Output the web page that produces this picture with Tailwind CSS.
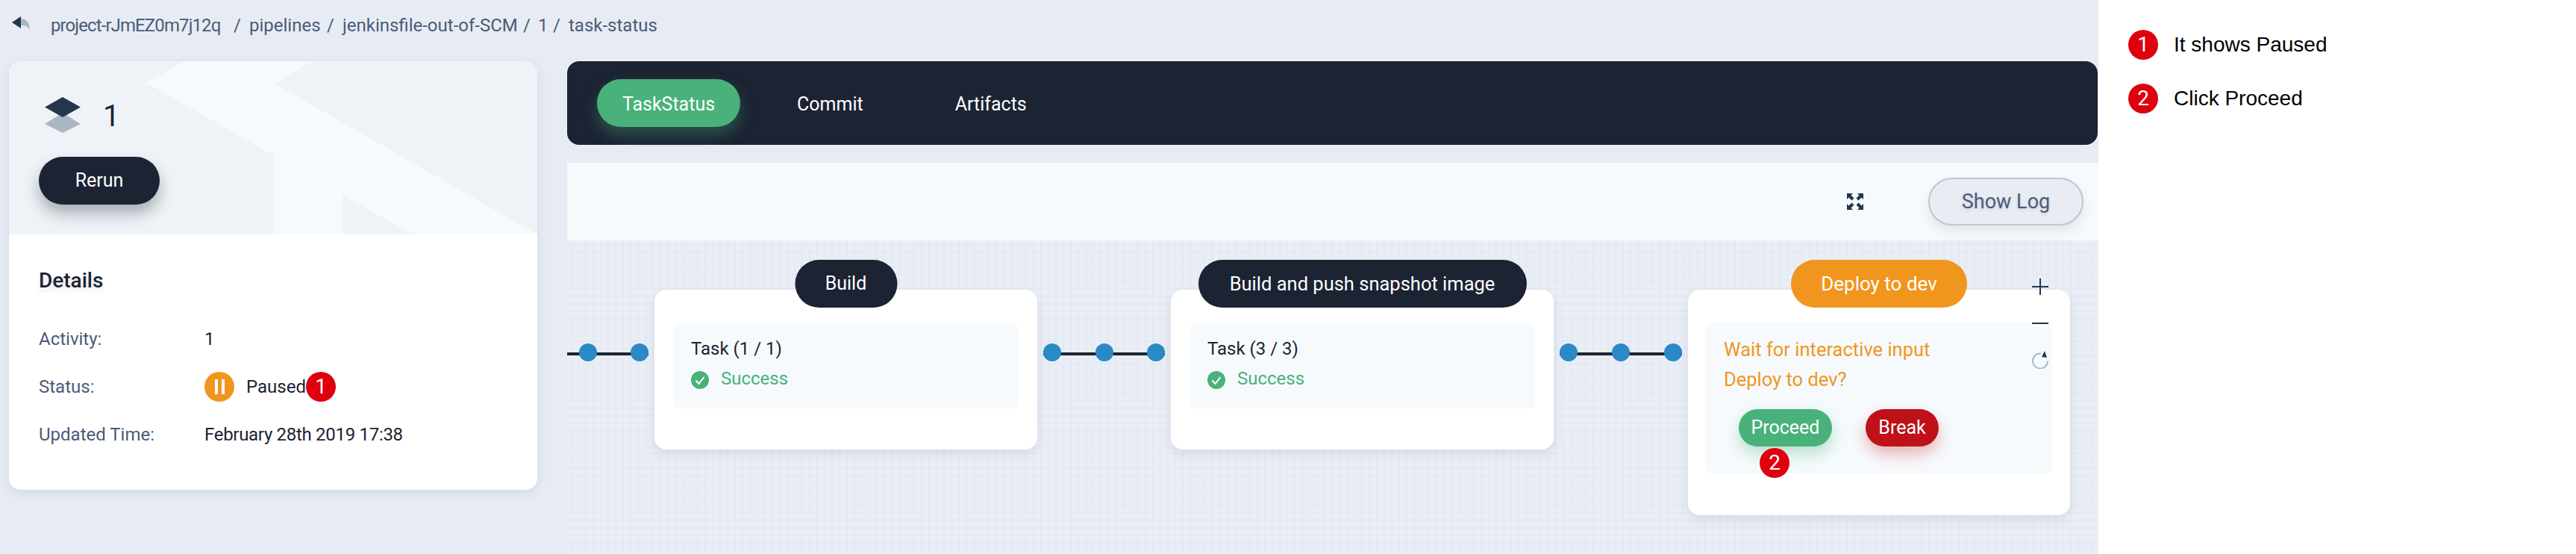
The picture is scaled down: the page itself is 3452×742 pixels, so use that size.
<!DOCTYPE html>
<html lang="en">
<head>
    <meta charset="UTF-8">
    <title>task-status</title>
    <script src="https://cdn.jsdelivr.net/npm/@tailwindcss/browser@4"></script>
</head>
<body class="font-['Roboto',sans-serif] text-[24px] text-[#1c2333] bg-white">

<div class="flex h-[742px] w-[3452px] overflow-hidden">
    <!-- Main area -->
    <div class="w-[2812px] shrink-0 bg-[#e7ecf4] flex flex-col">

        <!-- Breadcrumb -->
        <div class="h-[82px] shrink-0 flex items-start pt-[16px] pl-[16px] text-[#4a5b78] whitespace-nowrap">
            <svg class="w-[24px] h-[28px] mr-[28px] mt-[1px]" viewBox="0 0 24 28">
                <path d="M12 8 C19 8 24 14 24 23 C21 18 17 17 12 17 Z" fill="#a9b7c4"/>
                <path d="M0 13 L12 5 L12 21 Z" fill="#24364b"/>
            </svg>
            <span class="w-[234px] tracking-[-0.9px]">project-rJmEZ0m7j12q</span>
            <span class="w-[32px] text-center">/</span>
            <span class="w-[93px]">pipelines</span>
            <span class="w-[32px] text-center">/</span>
            <span class="w-[232px]">jenkinsfile-out-of-SCM</span>
            <span class="w-[30px] text-center">/</span>
            <span class="w-[9px]">1</span>
            <span class="w-[32px] text-center">/</span>
            <span>task-status</span>
        </div>

        <div class="flex flex-1 min-h-0">
            <!-- Left card -->
            <div class="ml-[12px] w-[708px] h-[574px] shrink-0 rounded-[16px] bg-white shadow-[0_4px_16px_rgba(36,46,66,0.1)] overflow-hidden">
                <div class="relative h-[232px] bg-[#eff3f7] pl-[40px] pt-[48px]">
                    <svg class="absolute left-0 top-0 w-[708px] h-[232px]" viewBox="0 0 708 232">
                        <polygon points="235,0 184,29 355,126 355,232 447,232 447,179 541,232 708,232 356,30 407,0" fill="#f6fafd"/>
                    </svg>
                    <div class="relative flex items-center h-[48px] pl-[8px]">
                        <svg class="w-[48px] h-[48px]" viewBox="0 0 48 48">
                            <path d="M24 21 L48 36 L24 48 L0 36 Z" fill="#a9b7c4"/>
                            <path d="M24 0 L48 13.5 L24 27 L0 13.5 Z" fill="#24364b"/>
                        </svg>
                        <span class="ml-[30px] mt-[4px] text-[40px] leading-[48px]">1</span>
                    </div>
                    <button class="relative mt-[32px] w-[162px] h-[64px] rounded-full bg-[#1c2333] text-white text-[25px] shadow-[0_12px_20px_rgba(36,46,66,0.35)]">Rerun</button>
                </div>
                <div class="pl-[40px] pt-[44px]">
                    <h3 class="text-[28px] leading-[36px] font-medium [text-shadow:0_4px_6px_rgba(36,46,66,0.12)]">Details</h3>
                    <div class="mt-[28px] flex flex-col">
                        <div class="flex items-center h-[64px]">
                            <span class="w-[222px] text-[#4a5b78]">Activity:</span><span>1</span>
                        </div>
                        <div class="flex items-center h-[64px]">
                            <span class="w-[222px] text-[#4a5b78]">Status:</span>
                            <span class="w-[40px] h-[40px] rounded-full bg-[#f0961e] flex items-center justify-center gap-[5px]">
                                <i class="w-[4px] h-[20px] bg-white"></i><i class="w-[4px] h-[20px] bg-white"></i>
                            </span>
                            <span class="ml-[16px] w-[80px]">Paused</span>
                            <span class="w-[40px] h-[40px] rounded-full bg-[#df000f] text-white flex items-center justify-center text-[28px]">1</span>
                        </div>
                        <div class="flex items-center h-[64px]">
                            <span class="w-[222px] text-[#4a5b78]">Updated Time:</span><span class="tracking-[-0.3px]">February 28th 2019 17:38</span>
                        </div>
                    </div>
                </div>
            </div>

            <!-- Right column -->
            <div class="ml-[40px] flex-1 min-w-0 flex flex-col">
                <div class="h-[112px] shrink-0 mr-[1px] rounded-[16px] bg-[#1c2333] flex items-center pl-[40px] text-white text-[25px]">
                    <a class="w-[192px] h-[64px] rounded-full bg-[#48b27a] flex items-center justify-center pt-[3px] shadow-[0_10px_20px_rgba(72,178,122,0.35)]">TaskStatus</a>
                    <a class="ml-[76px] mt-[3px]">Commit</a>
                    <a class="ml-[123px] mt-[3px]">Artifacts</a>
                </div>

                <div class="mt-[24px] h-[104px] shrink-0 bg-[#f6fafd] flex items-center justify-end pr-[20px]">
                    <svg class="w-[22px] h-[22px] mr-[87px] mt-[-1px]" viewBox="0 0 22 22" fill="#24364b">
                        <path d="M0 0 H8 L5.5 2.5 L9.5 6.5 L6.5 9.5 L2.5 5.5 L0 8 Z"/>
                        <path d="M22 0 V8 L19.500 5.500 L15.500 9.500 L12.500 6.500 L16.500 2.500 L14 0 Z"/>
                        <path d="M0 22 V14 L2.500 16.500 L6.500 12.500 L9.500 15.500 L5.500 19.500 L8 22 Z"/>
                        <path d="M22 22 H14 L16.500 19.500 L12.500 15.500 L15.500 12.500 L19.500 16.500 L22 14 Z"/>
                    </svg>
                    <button class="w-[208px] h-[64px] rounded-full border-2 border-[#bcc6d3] bg-[#e9edf3] text-[#4a5b78] text-[27px] shadow-[0_8px_16px_rgba(36,46,66,0.1)] [text-shadow:0_2px_4px_rgba(36,46,66,0.15)]">Show Log</button>
                </div>

                <!-- Pipeline canvas -->
                <div class="relative flex-1 min-h-0 overflow-hidden bg-[#eaeff7] bg-[linear-gradient(#e5eaf2_2px,transparent_2px),linear-gradient(90deg,#e5eaf2_2px,transparent_2px)] bg-[size:10px_10px] bg-[position:4px_4px] pt-[66px] flex items-start">
                    <!-- line into first stage -->
                    <div class="relative w-[117px] h-[214px] shrink-0 flex items-center">
                        <div class="absolute left-0 right-[8px] top-[84px] h-[4px] bg-[#1c2333]"></div>
                        <span class="absolute left-[16px] top-[72px] w-[24px] h-[24px] rounded-full bg-[#2a8ac6]"></span>
                        <span class="absolute left-[85px] top-[72px] w-[24px] h-[24px] rounded-full bg-[#2a8ac6]"></span>
                    </div>

                    <!-- Build -->
                    <div class="relative w-[513px] h-[214px] shrink-0 rounded-[16px] bg-white shadow-[0_6px_16px_rgba(36,46,66,0.1)] px-[25px] pt-[45px]">
                        <div class="absolute left-1/2 -translate-x-1/2 top-[-40px] w-[137px] h-[64px] rounded-full bg-[#1c2333] text-white text-[25px] flex items-center justify-center">Build</div>
                        <div class="h-[114px] rounded-[8px] bg-[#f6fafd] pl-[24px] pt-[16px]">
                            <p class="leading-[36px]">Task (1 / 1)</p>
                            <p class="mt-[4px] flex items-center text-[#48b27a] leading-[36px]">
                                <svg class="w-[24px] h-[24px] mr-[16px] mt-[4px]" viewBox="0 0 24 24"><circle cx="12" cy="12" r="12" fill="#48b27a"/><path d="M6.500 12.500 L10.500 17 L17.500 8" fill="none" stroke="#fff" stroke-width="2"/></svg>
                                Success
                            </p>
                        </div>
                    </div>

                    <!-- connector -->
                    <div class="relative w-[179px] h-[214px] shrink-0">
                        <div class="absolute left-[8px] right-[8px] top-[84px] h-[4px] bg-[#1c2333]"></div>
                        <span class="absolute left-[8px] top-[72px] w-[24px] h-[24px] rounded-full bg-[#2a8ac6]"></span>
                        <span class="absolute left-[78px] top-[72px] w-[24px] h-[24px] rounded-full bg-[#2a8ac6]"></span>
                        <span class="absolute left-[147px] top-[72px] w-[24px] h-[24px] rounded-full bg-[#2a8ac6]"></span>
                    </div>

                    <!-- Build and push snapshot image -->
                    <div class="relative w-[513px] h-[214px] shrink-0 rounded-[16px] bg-white shadow-[0_6px_16px_rgba(36,46,66,0.1)] px-[25px] pt-[45px]">
                        <div class="absolute left-1/2 -translate-x-1/2 top-[-40px] w-[440px] h-[64px] rounded-full bg-[#1c2333] text-white text-[25.500px] flex items-center justify-center whitespace-nowrap">Build and push snapshot image</div>
                        <div class="h-[114px] rounded-[8px] bg-[#f6fafd] pl-[24px] pt-[16px]">
                            <p class="leading-[36px]">Task (3 / 3)</p>
                            <p class="mt-[4px] flex items-center text-[#48b27a] leading-[36px]">
                                <svg class="w-[24px] h-[24px] mr-[16px] mt-[4px]" viewBox="0 0 24 24"><circle cx="12" cy="12" r="12" fill="#48b27a"/><path d="M6.500 12.500 L10.500 17 L17.500 8" fill="none" stroke="#fff" stroke-width="2"/></svg>
                                Success
                            </p>
                        </div>
                    </div>

                    <!-- connector -->
                    <div class="relative w-[180px] h-[214px] shrink-0">
                        <div class="absolute left-[8px] right-[8px] top-[84px] h-[4px] bg-[#1c2333]"></div>
                        <span class="absolute left-[8px] top-[72px] w-[24px] h-[24px] rounded-full bg-[#2a8ac6]"></span>
                        <span class="absolute left-[78px] top-[72px] w-[24px] h-[24px] rounded-full bg-[#2a8ac6]"></span>
                        <span class="absolute left-[148px] top-[72px] w-[24px] h-[24px] rounded-full bg-[#2a8ac6]"></span>
                    </div>

                    <!-- Deploy to dev -->
                    <div class="relative w-[512px] h-[302px] shrink-0 rounded-[16px] bg-white shadow-[0_6px_16px_rgba(36,46,66,0.1)] px-[24px] pt-[44px]">
                        <div class="absolute left-1/2 -translate-x-1/2 top-[-40px] w-[236px] h-[64px] rounded-full bg-[#f0961e] text-white text-[26px] flex items-center justify-center">Deploy to dev</div>
                        <div class="relative h-[202px] rounded-[8px] bg-[#f6fafd] pl-[24px] pt-[16px] text-[#f0961e] text-[25.500px]">
                            <p class="leading-[40px]">Wait for interactive input</p>
                            <p class="leading-[40px]">Deploy to dev?</p>
                            <div class="flex mt-[20px] ml-[20px] text-white text-[25px]">
                                <button class="w-[125px] h-[50px] rounded-full bg-[#48b27a] shadow-[0_10px_20px_rgba(72,178,122,0.35)]">Proceed</button>
                                <button class="ml-[45px] w-[98px] h-[50px] rounded-full bg-[#be1118] shadow-[0_10px_20px_rgba(190,17,24,0.3)]">Break</button>
                            </div>
                            <span class="absolute left-[72px] top-[168px] w-[40px] h-[40px] rounded-full bg-[#df000f] text-white flex items-center justify-center text-[28px]">2</span>
                        </div>
                    </div>

                    <!-- Zoom controls -->
                    <div class="absolute left-[1963px] top-[51px] w-[22px] flex flex-col items-center">
                        <svg class="w-[22px] h-[22px]" viewBox="0 0 22 22"><path d="M0 11 H22 M11 0 V22" stroke="#24364b" stroke-width="2"/></svg>
                        <svg class="w-[22px] h-[4px] mt-[36px]" viewBox="0 0 22 4"><path d="M0 2 H22" stroke="#24364b" stroke-width="2"/></svg>
                        <svg class="w-[22px] h-[26px] mt-[33px]" viewBox="0 0 22 26">
                            <path d="M12 5.500 A10 10 0 1 0 21 15.500" fill="none" stroke="#a9b7c4" stroke-width="2"/>
                            <path d="M13 10 L17 2 L20 11 Z" fill="#24364b"/>
                        </svg>
                    </div>
                </div>
            </div>
        </div>
    </div>

    <!-- Notes -->
    <div class="flex-1 bg-white pl-[40px] pt-[40px] text-[28px] text-black flex flex-col gap-[32px]">
        <div class="flex items-center h-[40px]">
            <span class="w-[40px] h-[40px] rounded-full bg-[#df000f] text-white flex items-center justify-center">1</span>
            <span class="ml-[21px] font-['Liberation_Sans',sans-serif]">It shows Paused</span>
        </div>
        <div class="flex items-center h-[40px]">
            <span class="w-[40px] h-[40px] rounded-full bg-[#df000f] text-white flex items-center justify-center">2</span>
            <span class="ml-[21px] font-['Liberation_Sans',sans-serif]">Click Proceed</span>
        </div>
    </div>
</div>

</body>
</html>
